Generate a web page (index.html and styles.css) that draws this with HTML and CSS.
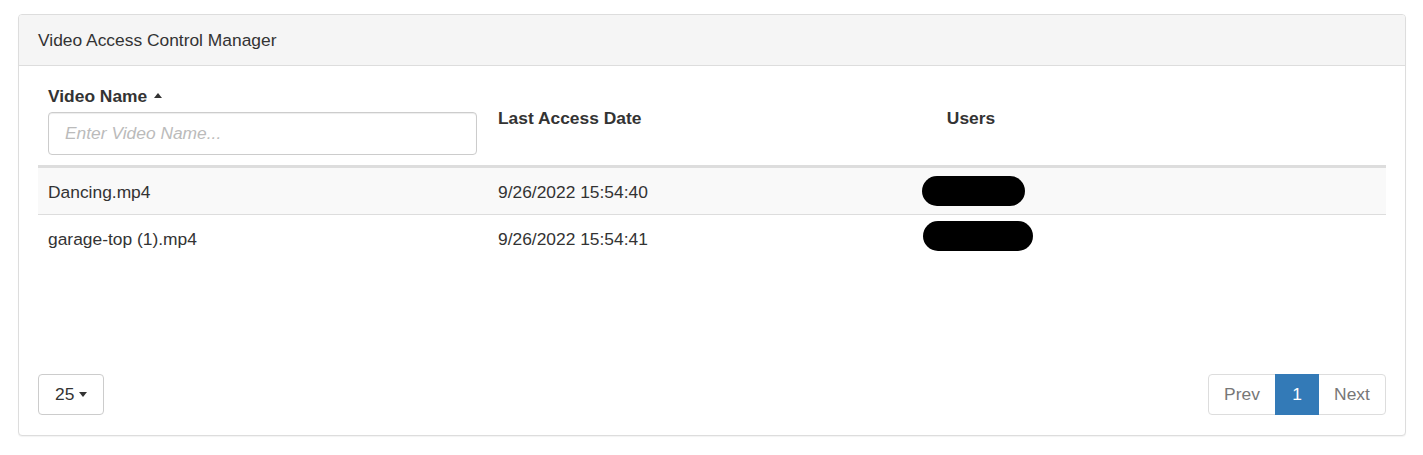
FILE: index.html
```html
<!DOCTYPE html>
<html>
<head>
<meta charset="utf-8">
<link rel="stylesheet" href="styles.css">
</head>
<body>
<div class="panel">
  <div class="panel-heading">Video Access Control Manager</div>
  <div class="panel-body">
    <div class="table-wrap">
      <table class="grid">
        <colgroup>
          <col class="c1"><col class="c2"><col class="c3"><col>
        </colgroup>
        <thead>
          <tr>
            <th class="col-name">
              <div class="sort">Video Name <span class="caret-up"></span></div>
              <input class="filter" type="text" placeholder="Enter Video Name...">
            </th>
            <th>Last Access Date</th>
            <th class="col-users">Users</th>
            <th></th>
          </tr>
        </thead>
        <tbody>
          <tr class="odd">
            <td>Dancing.mp4</td>
            <td>9/26/2022 15:54:40</td>
            <td class="users"><span class="blob b1"></span></td>
            <td></td>
          </tr>
          <tr>
            <td>garage-top (1).mp4</td>
            <td>9/26/2022 15:54:41</td>
            <td class="users"><span class="blob b2"></span></td>
            <td></td>
          </tr>
        </tbody>
      </table>
    </div>
    <div class="footer">
      <button class="size-btn">25 <span class="caret-down"></span></button>
      <ul class="pagination">
        <li class="disabled"><span>Prev</span></li>
        <li class="active"><span>1</span></li>
        <li class="disabled"><span>Next</span></li>
      </ul>
    </div>
  </div>
</div>
</body>
</html>
```
FILE: styles.css
```css
* { box-sizing: border-box; }
html, body { margin: 0; padding: 0; background: #fff; }
body {
  font-family: "Liberation Sans", Arial, Helvetica, sans-serif;
  font-size: 17.4px;
  line-height: 23px;
  color: #333;
  padding: 14px 17px 14px 18px;
}
.panel {
  border: 1px solid #ddd;
  border-radius: 4px;
  background: #fff;
  box-shadow: 0 1px 1px rgba(0,0,0,0.05);
}
.panel-heading {
  background: #f5f5f5;
  border-bottom: 1px solid #ddd;
  border-radius: 3px 3px 0 0;
  padding: 14px 19px 13px;
  color: #333;
}
.panel-body {
  padding: 9px 19px 20px;
}
.table-wrap { min-height: 299px; }
.grid {
  width: 100%;
  border-collapse: collapse;
  border-spacing: 0;
  table-layout: fixed;
}
.c1 { width: 450px; }
.c2 { width: 424px; }
.c3 { width: 118px; }
.grid th {
  text-align: left;
  font-weight: bold;
  vertical-align: middle;
  padding: 8px 10px 12px;
  border-bottom: 3px solid #ddd;
}
.grid th.col-name { padding: 10px 10px 10px; }
.grid td {
  padding: 13px 10px 10px;
  border-top: 1px solid #ddd;
  vertical-align: top;
  white-space: nowrap;
}
.grid tbody tr:first-child td { border-top: 0; }
.grid tr.odd td { background: #f9f9f9; }
.grid th.col-users { text-align: center; }
.grid td.users { text-align: center; padding-top: 8px; padding-bottom: 6px; overflow: visible; }
.sort { line-height: 22px; margin-bottom: 5px; }
.caret-up {
  display: inline-block;
  width: 0; height: 0;
  margin-left: 2px;
  vertical-align: middle;
  border-left: 4px solid transparent;
  border-right: 4px solid transparent;
  border-bottom: 5px solid #333;
  position: relative; top: -2px;
}
.filter {
  display: block;
  width: 429px;
  height: 43px;
  padding: 6px 16px;
  font-family: inherit;
  font-size: 17.4px;
  color: #555;
  border: 1px solid #ccc;
  border-radius: 4px;
  box-shadow: inset 0 1px 1px rgba(0,0,0,0.075);
  font-weight: normal;
}
.filter::placeholder { color: #bbb; font-style: italic; }
.blob {
  display: inline-block;
  height: 30px;
  background: #000;
  border-radius: 15px;
  vertical-align: middle;
}
.b1 { width: 103px; }
.b2 { width: 110px; transform: translateX(1px) translateY(-2px); }
.footer {
  display: flex;
  justify-content: space-between;
  align-items: center;
}
.size-btn {
  height: 41px;
  padding: 0 16px 0 16px;
  font-family: inherit;
  font-size: 17.4px;
  color: #333;
  background: #fff;
  border: 1px solid #ccc;
  border-radius: 4px;
  display: flex;
  align-items: center;
  gap: 5px;
}
.caret-down {
  display: inline-block;
  width: 0; height: 0;
  border-left: 4.5px solid transparent;
  border-right: 4.5px solid transparent;
  border-top: 5px solid #333;
}
.pagination {
  display: flex;
  list-style: none;
  margin: 0;
  padding: 0;
}
.pagination li span {
  display: flex;
  align-items: center;
  justify-content: center;
  height: 41px;
  padding: 0 10px;
  border: 1px solid #ddd;
  margin-left: -1px;
  color: #777;
  background: #fff;
}
.pagination li:first-child span { border-radius: 4px 0 0 4px; margin-left: 0; width: 68px; }
.pagination li:last-child span { border-radius: 0 4px 4px 0; width: 68px; }
.pagination li.active span {
  background: #337ab7;
  border-color: #337ab7;
  color: #fff;
  width: 44px;
  position: relative;
  z-index: 2;
}
```
